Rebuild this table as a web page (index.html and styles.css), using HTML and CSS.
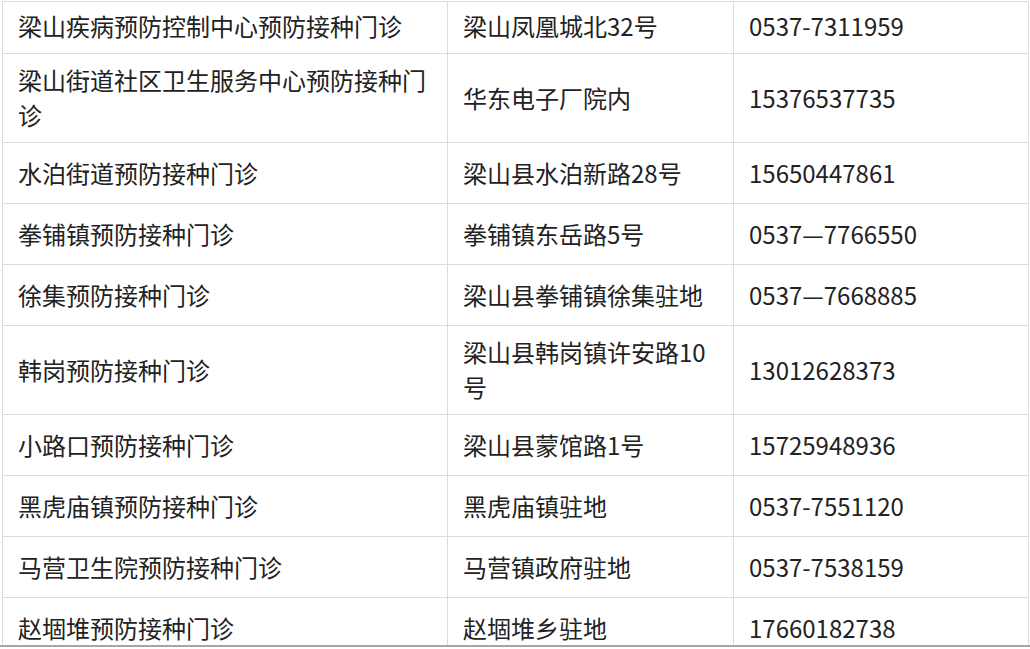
FILE: index.html
```html
<!DOCTYPE html>
<html lang="zh-CN">
<head>
<meta charset="utf-8">
<title>预防接种门诊</title>
<link rel="stylesheet" href="styles.css">
</head>
<body>
<div class="frame">
<table class="clinics">
<colgroup><col class="c1"><col class="c2"><col class="c3"></colgroup>
<tbody>
<tr class="first"><td>梁山疾病预防控制中心预防接种门诊</td><td>梁山凤凰城北32号</td><td>0537-7311959</td></tr>
<tr><td>梁山街道社区卫生服务中心预防接种门诊</td><td>华东电子厂院内</td><td>15376537735</td></tr>
<tr><td>水泊街道预防接种门诊</td><td>梁山县水泊新路28号</td><td>15650447861</td></tr>
<tr><td>拳铺镇预防接种门诊</td><td>拳铺镇东岳路5号</td><td>0537—7766550</td></tr>
<tr><td>徐集预防接种门诊</td><td>梁山县拳铺镇徐集驻地</td><td>0537—7668885</td></tr>
<tr><td>韩岗预防接种门诊</td><td>梁山县韩岗镇许安路10号</td><td>13012628373</td></tr>
<tr><td>小路口预防接种门诊</td><td>梁山县蒙馆路1号</td><td>15725948936</td></tr>
<tr><td>黑虎庙镇预防接种门诊</td><td>黑虎庙镇驻地</td><td>0537-7551120</td></tr>
<tr><td>马营卫生院预防接种门诊</td><td>马营镇政府驻地</td><td>0537-7538159</td></tr>
<tr><td>赵堌堆预防接种门诊</td><td>赵堌堆乡驻地</td><td>17660182738</td></tr>
</tbody>
</table>
</div>
</body>
</html>
```
FILE: styles.css
```css
html, body {
  margin: 0;
  padding: 0;
  background: #ffffff;
}
.frame {
  height: 647px;
  overflow: hidden;
  padding: 1px 0 0 2px;
  box-sizing: border-box;
  border-bottom: 2px solid #a3a6a9;
}
.clinics {
  border-collapse: collapse;
  table-layout: fixed;
  width: 1026px;
  font-family: "Noto Sans CJK SC", "Noto Sans", sans-serif;
  font-size: 24px;
  color: #222222;
}
.c1 { width: 445px; }
.c2 { width: 286px; }
.c3 { width: 295px; }
.clinics tr { height: 61px; }
.clinics tr.first { height: 52px; }
.clinics td {
  border: 1px solid #dcdcdc;
  padding: 8px 15px 10px;
  line-height: 35px;
  vertical-align: middle;
  word-break: break-all;
}
.clinics tr.first td {
  padding-top: 4px;
  padding-bottom: 8px;
}
```
